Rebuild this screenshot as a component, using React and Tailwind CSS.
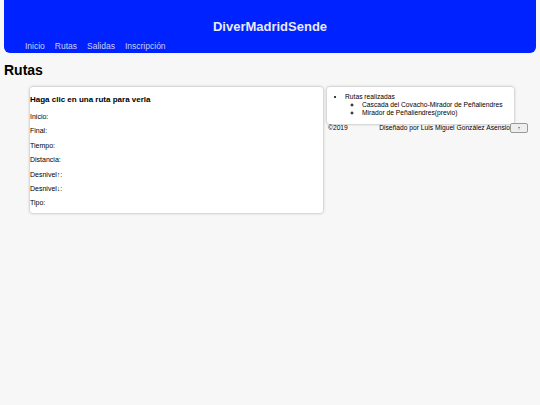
const fields = ['Inicio:', 'Final:', 'Tiempo:', 'Distancia:', 'Desnivel↑:', 'Desnivel↓:', 'Tipo:'];
const rutas = ['Cascada del Covacho-Mirador de Peñaliendres', 'Mirador de Peñaliendres(previo)'];

function App() {
  return (
    <div className="min-h-[405px] bg-[#f7f7f7] font-['Liberation_Sans',Arial,sans-serif] text-black">
      <header className="mx-[4px] h-[53px] rounded-b-[6px] bg-[#0022ff] flex flex-col">
        <h1 className="mt-[18px] text-center text-[13px] font-bold leading-[18px] text-[#e8eaf6]">DiverMadridSende</h1>
        <nav className="mt-auto mb-[1px] flex gap-[10px] pl-[21px] text-[8.5px] leading-[11px] text-[#c9d0f5]">
          <a href="#">Inicio</a>
          <a href="#">Rutas</a>
          <a href="#">Salidas</a>
          <a href="#">Inscripción</a>
        </nav>
      </header>

      <h2 className="mt-[8px] ml-[4px] text-[14px] font-bold leading-[18px]">Rutas</h2>

      <div className="mt-[8px] flex items-start gap-[4px] pl-[30px]">
        <section className="w-[293px] h-[126px] rounded-[3px] bg-white shadow-[0_0_3px_rgba(0,0,0,0.35)] pt-[8px]">
          <h3 className="text-[8px] font-bold leading-[10px]">Haga clic en una ruta para verla</h3>
          <div className="mt-[7px] flex flex-col gap-[4px] text-[7px] leading-[10.4px]">
            {fields.map((f) => (
              <p key={f}>{f}</p>
            ))}
          </div>
        </section>

        <div className="flex flex-col">
          <aside className="w-[187px] h-[37px] rounded-[3px] bg-white shadow-[0_0_3px_rgba(0,0,0,0.35)] pt-[6px] pl-[10px] text-[6.7px] leading-[8px]">
            <ul className="list-disc pl-[8px]">
              <li>
                Rutas realizadas
                <ul className="[list-style-type:circle] pl-[17px]">
                  {rutas.map((r) => (
                    <li key={r} className="[list-style-type:circle]">{r}</li>
                  ))}
                </ul>
              </li>
            </ul>
          </aside>
          <footer className="mt-[-1px] flex items-center text-[6.7px] leading-[8px]">
            <span className="ml-[1px]">©2019</span>
            <span className="ml-auto">Diseñado por Luis Miguel González Asensio</span>
            <button className="h-[10px] w-[18px] -mr-[14px] rounded-[2px] border border-[#999] bg-[#eee] flex items-center justify-center">
              <span className="text-[5px] leading-none">↑</span>
            </button>
          </footer>
        </div>
      </div>
    </div>
  );
}

export default App;
